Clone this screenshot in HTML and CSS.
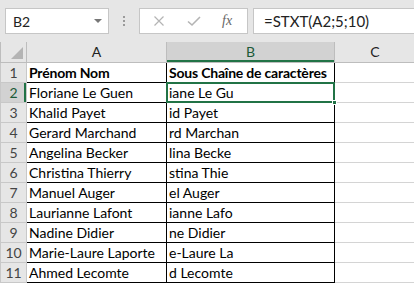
FILE: index.html
```html
<!DOCTYPE html>
<html lang="fr">
<head>
  <meta charset="UTF-8">
  <title>STXT</title>
  <link rel="stylesheet" href="styles.css">
</head>
<body>
  <div class="toolbar">
    <div class="name-box">
      <span>B2</span>
      <span class="drop-arrow"></span>
    </div>
    <div class="grip">
      <i></i><i></i><i></i>
    </div>
    <div class="fx-box">
      <svg class="icon" width="12" height="12" viewBox="0 0 12 12">
        <path d="M1.5 1.5 L10.5 10.5 M10.5 1.5 L1.5 10.5" stroke="#b4b4b4" stroke-width="1.2" fill="none"/>
      </svg>
      <svg class="icon" width="14" height="12" viewBox="0 0 14 12">
        <path d="M1 6.5 L5 10 L13 2" stroke="#b4b4b4" stroke-width="1.6" fill="none"/>
      </svg>
      <span class="fx">fx</span>
    </div>
    <div class="formula">=STXT(A2;5;10)</div>
  </div>

  <table class="sheet">
    <colgroup>
      <col class="c-row">
      <col class="c-a">
      <col class="c-b">
      <col class="c-c">
    </colgroup>
    <thead>
      <tr>
        <th class="corner"><span class="tri"></span></th>
        <th>A</th>
        <th class="sel-col">B</th>
        <th>C</th>
      </tr>
    </thead>
    <tbody>
      <tr><th>1</th><td class="b"><b>Prénom Nom</b></td><td class="b"><b>Sous Chaîne de caractères</b></td><td></td></tr>
      <tr><th class="sel-row">2</th><td class="b">Floriane Le Guen</td><td class="b active">iane Le Gu<span class="handle"></span></td><td></td></tr>
      <tr><th>3</th><td class="b">Khalid Payet</td><td class="b">id Payet</td><td></td></tr>
      <tr><th>4</th><td class="b">Gerard Marchand</td><td class="b">rd Marchan</td><td></td></tr>
      <tr><th>5</th><td class="b">Angelina Becker</td><td class="b">lina Becke</td><td></td></tr>
      <tr><th>6</th><td class="b">Christina Thierry</td><td class="b">stina Thie</td><td></td></tr>
      <tr><th>7</th><td class="b">Manuel Auger</td><td class="b">el Auger</td><td></td></tr>
      <tr><th>8</th><td class="b">Laurianne Lafont</td><td class="b">ianne Lafo</td><td></td></tr>
      <tr><th>9</th><td class="b">Nadine Didier</td><td class="b">ne Didier</td><td></td></tr>
      <tr><th>10</th><td class="b">Marie-Laure Laporte</td><td class="b">e-Laure La</td><td></td></tr>
      <tr><th>11</th><td class="b">Ahmed Lecomte</td><td class="b">d Lecomte</td><td></td></tr>
    </tbody>
  </table>
</body>
</html>
```

FILE: styles.css
```css
* {
  margin: 0;
  padding: 0;
  box-sizing: border-box;
}

body {
  font-family: 'Lato', 'Liberation Sans', sans-serif;
  background: #ffffff;
  color: #000000;
  width: 414px;
  height: 284px;
  overflow: hidden;
}

/* Formula bar */
.toolbar {
  background: #e6e6e6;
  height: 42px;
  padding: 8px 0 0 5px;
  display: flex;
  align-items: flex-start;
}

.name-box {
  width: 104px;
  height: 26px;
  background: #ffffff;
  border: 1px solid #c6c6c6;
  display: flex;
  align-items: center;
  justify-content: space-between;
  padding: 0 6px 0 7px;
  font-size: 14px;
  color: #222222;
}

.drop-arrow {
  width: 0;
  height: 0;
  border-left: 4px solid transparent;
  border-right: 4px solid transparent;
  border-top: 4px solid #777777;
}

.grip {
  width: 30px;
  height: 26px;
  display: flex;
  flex-direction: column;
  align-items: center;
  justify-content: center;
  gap: 2px;
}

.grip i {
  width: 2px;
  height: 2px;
  background: #9a9a9a;
}

.fx-box {
  width: 109px;
  height: 26px;
  background: #ffffff;
  border: 1px solid #c6c6c6;
  display: flex;
  align-items: center;
  padding-left: 13px;
  gap: 22px;
}

.fx {
  font-family: 'Liberation Serif', serif;
  font-style: italic;
  font-size: 14px;
  color: #666666;
  margin-left: -1px;
}

.formula {
  margin-left: 5px;
  flex: 1;
  height: 26px;
  background: #ffffff;
  border: 1px solid #c6c6c6;
  border-right: none;
  padding-left: 10px;
  font-size: 15px;
  line-height: 24px;
  color: #222222;
}

/* Grid */
.sheet {
  border-collapse: collapse;
  table-layout: fixed;
  width: 415px;
  font-size: 14px;
}

.c-row { width: 26px; }
.c-a { width: 140px; }
.c-b { width: 168px; }
.c-c { width: 81px; }

.sheet th,
.sheet td {
  height: 20px;
  border: 1px solid #d4d4d4;
  white-space: nowrap;
}

.sheet thead th {
  background: #e6e6e6;
  font-weight: normal;
  font-size: 14px;
  color: #222222;
  border-color: #bdbdbd;
  border-top: none;
}

.sheet tbody th {
  background: #e6e6e6;
  font-weight: normal;
  font-size: 14px;
  color: #444444;
  border-color: #c8c8c8;
  text-align: center;
}

.sheet td {
  padding: 0 2px;
  text-align: left;
}

.sheet td b {
  letter-spacing: -0.2px;
}

.sheet td.b {
  border-color: #000000;
}

.sheet thead th.sel-col {
  background: #d2d2d2;
  box-shadow: inset 0 -2px 0 #217346;
  color: #1d5a38;
}

.sheet tbody th.sel-row {
  background: #d2d2d2;
  box-shadow: inset -2px 0 0 #217346;
  color: #1d5a38;
}

.corner {
  position: relative;
}

.tri {
  position: absolute;
  right: 3px;
  bottom: 3px;
  width: 0;
  height: 0;
  border-left: 12px solid transparent;
  border-bottom: 12px solid #b4b4b4;
}

.active {
  position: relative;
}

.active::after {
  content: '';
  position: absolute;
  left: -1px;
  top: -1px;
  right: -1px;
  bottom: -1px;
  border: 2px solid #217346;
}

.handle {
  position: absolute;
  right: -3px;
  bottom: -3px;
  width: 5px;
  height: 5px;
  background: #217346;
  border: 1px solid #ffffff;
  z-index: 2;
}
```
